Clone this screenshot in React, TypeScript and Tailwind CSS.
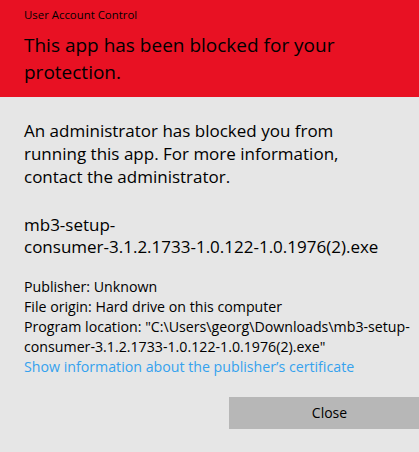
const font = { fontFamily: '"Segoe UI", "Open Sans", sans-serif' };

export default function App() {
  return (
    <div
      className="flex h-[452px] w-[419px] flex-col overflow-hidden bg-[#e6e6e6] text-black"
      style={font}
    >
      <header className="h-[97px] shrink-0 bg-[#e81123] px-6 pt-[6px]">
        <div className="text-[11.4px] leading-[17px]">User Account Control</div>
        <h1 className="mt-[9.4px] text-[19px] leading-[27px] font-normal">
          This app has been blocked for your
          <br />
          protection.
        </h1>
      </header>

      <main className="flex flex-1 flex-col px-6 pt-[21.5px]">
        <p className="text-[17px] leading-[23.3px]">
          An administrator has blocked you from
          <br />
          running this app. For more information,
          <br />
          contact the administrator.
        </p>

        <p className="mt-[25.9px] text-[17px] leading-[21.6px]">
          mb3-setup-
          <br />
          consumer-3.1.2.1733-1.0.122-1.0.1976(2).exe
        </p>

        <div className="mt-[19.7px] text-[14.2px] leading-[20px]">
          <div>Publisher: Unknown</div>
          <div>File origin: Hard drive on this computer</div>
          <div className="whitespace-nowrap">
            Program location: "C:\Users\georg\Downloads\mb3-setup-
            <br />
            consumer-3.1.2.1733-1.0.122-1.0.1976(2).exe"
          </div>
          <a href="#" className="text-[#35a2ee]">
            Show information about the publisher’s certificate
          </a>
        </div>

        <div className="mt-[19.8px] flex justify-end">
          <button
            type="button"
            className="-mr-[35px] h-[32px] w-[201px] bg-[#b7b7b7] text-[14px]"
          >
            Close
          </button>
        </div>
      </main>
    </div>
  );
}
